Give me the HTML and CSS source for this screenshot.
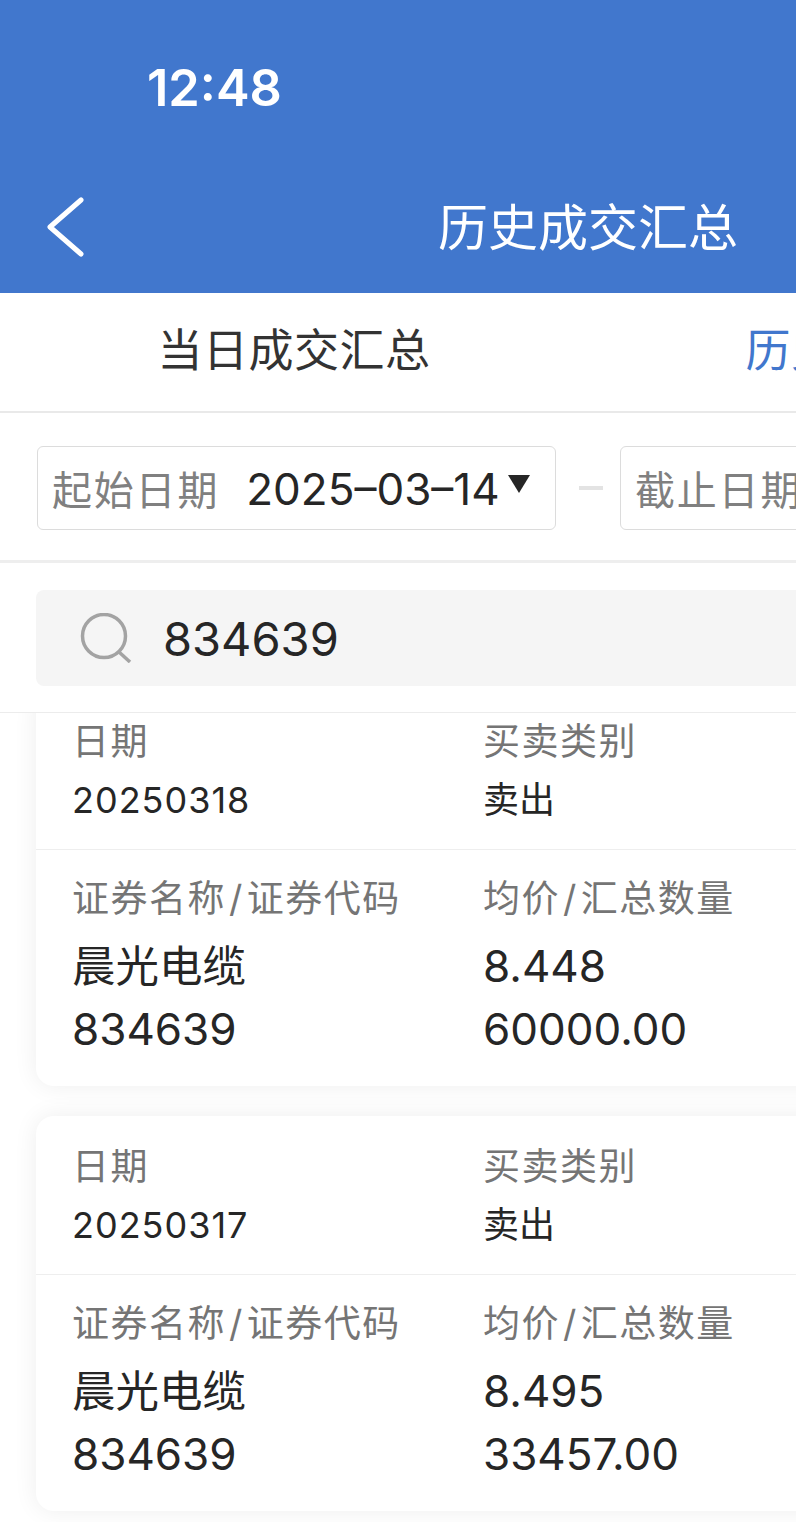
FILE: index.html
```html
<!DOCTYPE html>
<html lang="zh-CN">
<head>
    <meta charset="UTF-8" />
    <meta name="viewport" content="width=device-width, initial-scale=1.0" />
    <title>历史成交汇总</title>
    <link rel="stylesheet" href="styles.css">
</head>
<body>
<div class="page">
    <header class="top-bar">
        <div class="clock">12:48</div>
        <div class="nav-row">
            <svg class="back-icon" width="38" height="60" viewBox="0 0 38 60">
                <path d="M35 3 L4 30 L35 57" fill="none" stroke="#fff" stroke-width="5" stroke-linecap="round" stroke-linejoin="round"/>
            </svg>
            <h1 class="nav-title">历史成交汇总</h1>
        </div>
    </header>

    <nav class="tabs">
        <div class="tab">当日成交汇总</div>
        <div class="tab tab-active">历史成交汇总</div>
    </nav>

    <section class="date-filter">
        <div class="date-box">
            <span class="date-label">起始日期</span>
            <span class="date-value">2025–03–14</span>
            <span class="date-caret"></span>
        </div>
        <span class="date-dash"></span>
        <div class="date-box">
            <span class="date-label">截止日期</span>
            <span class="date-value">2025–03–18</span>
            <span class="date-caret"></span>
        </div>
    </section>

    <section class="search-wrap">
        <div class="search-box">
            <svg class="search-icon" width="54" height="50" viewBox="0 0 54 50">
                <circle cx="24" cy="23" r="21.5" fill="none" stroke="#a3a3a3" stroke-width="3.5"/>
                <path d="M39 39 L50 49" fill="none" stroke="#a3a3a3" stroke-width="3.5"/>
            </svg>
            <span class="search-text">834639</span>
        </div>
    </section>

    <main class="list">
        <div class="list-inner">
            <article class="card">
                <div class="card-row card-row-top">
                    <div class="cell">
                        <div class="cell-label">日期</div>
                        <div class="cell-small">20250318</div>
                    </div>
                    <div class="cell">
                        <div class="cell-label">买卖类别</div>
                        <div class="cell-small cell-cjk">卖出</div>
                    </div>
                </div>
                <div class="card-row card-row-main">
                    <div class="cell">
                        <div class="cell-label">证券名称<span class="slash">/</span>证券代码</div>
                        <div class="cell-big cell-name">晨光电缆</div>
                        <div class="cell-big">834639</div>
                    </div>
                    <div class="cell">
                        <div class="cell-label">均价<span class="slash">/</span>汇总数量</div>
                        <div class="cell-big">8.448</div>
                        <div class="cell-big">60000.00</div>
                    </div>
                </div>
            </article>
            <article class="card">
                <div class="card-row card-row-top">
                    <div class="cell">
                        <div class="cell-label">日期</div>
                        <div class="cell-small">20250317</div>
                    </div>
                    <div class="cell">
                        <div class="cell-label">买卖类别</div>
                        <div class="cell-small cell-cjk">卖出</div>
                    </div>
                </div>
                <div class="card-row card-row-main">
                    <div class="cell">
                        <div class="cell-label">证券名称<span class="slash">/</span>证券代码</div>
                        <div class="cell-big cell-name">晨光电缆</div>
                        <div class="cell-big">834639</div>
                    </div>
                    <div class="cell">
                        <div class="cell-label">均价<span class="slash">/</span>汇总数量</div>
                        <div class="cell-big">8.495</div>
                        <div class="cell-big">33457.00</div>
                    </div>
                </div>
            </article>
        </div>
    </main>
</div>
</body>
</html>
```

FILE: styles.css
```css
/* The app is wider than the window, so the right side gets cut off */
html, body {
    margin: 0;
    height: 100%;
    overflow: hidden;
    background-color: #fff;
}

body {
    font-family: Inter, "Noto Sans CJK SC", sans-serif;
    color: #262626;
}

.page {
    width: 1176px;
    height: 1522px;
    display: flex;
    flex-direction: column;
}

/* Blue header */
.top-bar {
    height: 293px;
    box-sizing: border-box;
    background-color: #4177cd;
    color: #fff;
    padding-top: 58px;
}

.clock {
    font-size: 50.5px;
    line-height: 60px;
    font-weight: 600;
    padding-left: 147px;
}

.nav-row {
    height: 80px;
    margin-top: 70px;
    display: flex;
    align-items: center;
    justify-content: center;
}

.back-icon {
    position: absolute;
    left: 46px;
    top: 197px;
}

.nav-title {
    margin: 0;
    font-size: 50px;
    line-height: 80px;
    font-weight: 400;
}

/* Tabs */
.tabs {
    height: 120px;
    box-sizing: border-box;
    display: flex;
    background-color: #fff;
    border-bottom: 2px solid #e9e9e9;
}

.tab {
    flex: 1;
    text-align: center;
    font-size: 45px;
    letter-spacing: 0.5px;
    line-height: 116px;
    color: #333;
}

.tab-active {
    color: #4177cd;
}

/* Date filter */
.date-filter {
    height: 150px;
    box-sizing: border-box;
    display: flex;
    align-items: flex-start;
    padding: 33px 37px 0;
    background-color: #fff;
    border-bottom: 3px solid #eeeeee;
}

.date-box {
    width: 519px;
    height: 84px;
    box-sizing: border-box;
    border: 1.5px solid #dcdcdc;
    border-radius: 6px;
    display: flex;
    align-items: center;
    padding-left: 14px;
    flex-shrink: 0;
}

.date-label {
    font-size: 40px;
    color: #808080;
    letter-spacing: 1.8px;
}

.date-value {
    font-size: 44px;
    margin-left: 27px;
    padding-top: 2px;
    color: #262626;
    white-space: nowrap;
}

.date-caret {
    width: 0;
    height: 0;
    margin-left: 8px;
    margin-bottom: 8px;
    border-left: 11px solid transparent;
    border-right: 11px solid transparent;
    border-top: 18px solid #262626;
}

.date-dash {
    width: 24px;
    height: 4px;
    margin: 40px 17px 0 23px;
    flex-shrink: 0;
    background-color: #e3e3e3;
}

/* Search */
.search-wrap {
    height: 150px;
    box-sizing: border-box;
    padding: 27px 36px 0;
    background-color: #fff;
    border-bottom: 1px solid #ececec;
}

.search-box {
    height: 96px;
    display: flex;
    align-items: center;
    padding-left: 44px;
    background-color: #f5f5f5;
    border-radius: 8px;
}

.search-text {
    font-size: 47px;
    margin-left: 29px;
    color: #262626;
}

/* Result cards */
.list {
    flex: 1;
    overflow: hidden;
}

.list-inner {
    margin-top: -22px;
    padding: 0 36px;
    display: flex;
    flex-direction: column;
    gap: 30px;
}

.card {
    height: 395px;
    background-color: #fff;
    border-radius: 18px;
    box-shadow: 0 0 24px rgba(0, 0, 0, 0.07);
}

.card-row {
    display: grid;
    grid-template-columns: 411px 1fr;
    padding-left: 36px;
}

.card-row-top {
    height: 159px;
    box-sizing: border-box;
    padding-top: 26px;
    border-bottom: 1.5px solid #eeeeee;
}

.card-row-main {
    padding-top: 24px;
}

.cell-label {
    font-size: 37px;
    line-height: 50px;
    color: #757575;
    letter-spacing: 1.5px;
}

.slash {
    margin: 0 3px;
}

.cell-small {
    font-size: 36px;
    letter-spacing: 1px;
    line-height: 50px;
    margin-top: 8px;
}

.cell-cjk {
    letter-spacing: 0;
}

.cell-big {
    font-size: 44px;
    line-height: 63px;
}

.cell-name {
    font-size: 43.5px;
}

.cell-label + .cell-big {
    margin-top: 11px;
}
```
